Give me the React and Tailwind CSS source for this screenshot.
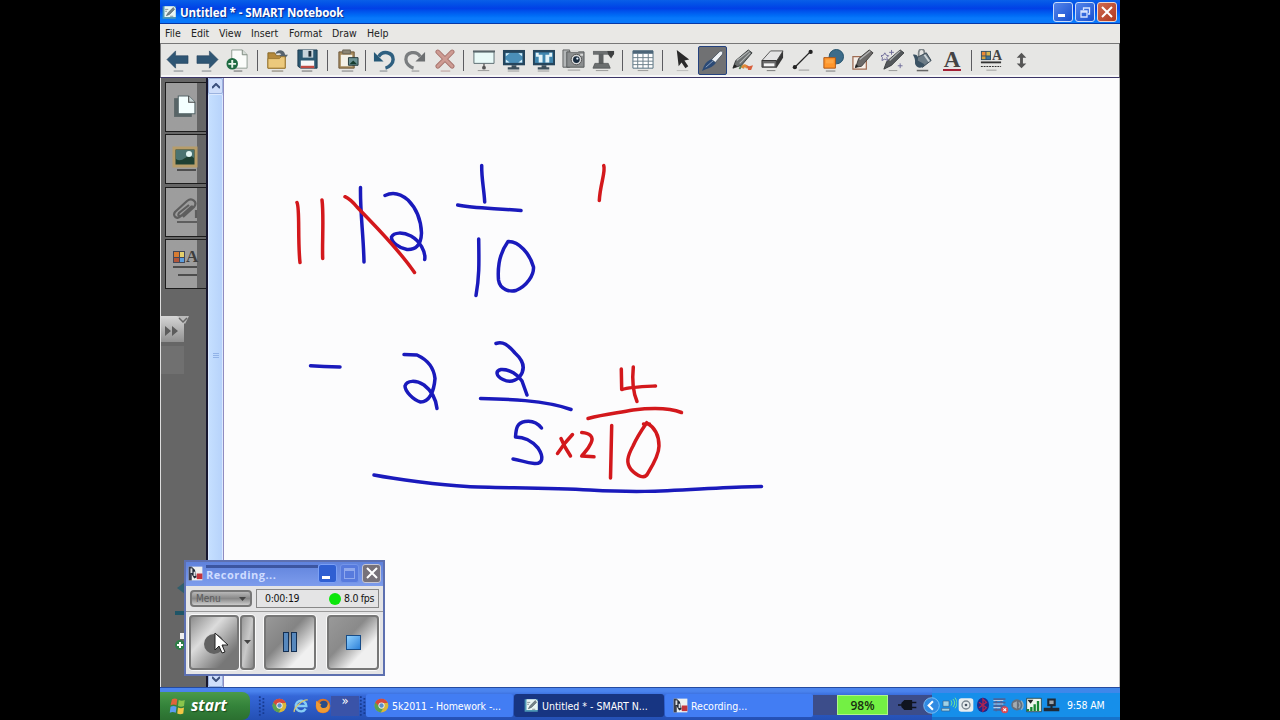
import React from "react";

const SEP = (w) => ({ sep: true, w });

/* Toolbar icons, all on a 24x24 grid */
const ICONS = {
  back: (
    <>
      <path d="M1 11 10 2v5h13v8H10v5z" fill="#2f5674" stroke="#24435c" strokeWidth=".6" />
      <path d="M8 23h10" stroke="#8d9296" strokeWidth="1.2" />
    </>
  ),
  forward: (
    <>
      <path d="M23 11 14 2v5H1v8h13v5z" fill="#2f5674" stroke="#24435c" strokeWidth=".6" />
      <path d="M6 23h10" stroke="#8d9296" strokeWidth="1.2" />
    </>
  ),
  addPage: (
    <>
      <path d="M6 1h11l5 5v14H6z" fill="#fafcfa" stroke="#8d9a90" />
      <path d="M17 1v5h5" fill="#d5ddd7" stroke="#7d8a80" />
      <circle cx="6.500" cy="15.500" r="6" fill="#1e6b42" />
      <path d="M6.500 11.500v8M2.500 15.500h8" stroke="#e6f5ea" strokeWidth="2" />
      <path d="M8 23h9" stroke="#777" strokeWidth="1.200" />
    </>
  ),
  open: (
    <>
      <path d="M2 4h7l2 3h9v13H2z" fill="#b58a3c" stroke="#876627" />
      <path d="M10 5c1-5 9-5 10 1h3l-5 6-4-6h2c-1-2-3-2-6-1z" fill="#56636d" />
      <path d="M2 20V10h12l2-2h4v12z" fill="#ecc97c" stroke="#9c7832" />
      <path d="M6 23h12" stroke="#8d8575" strokeWidth="1.200" />
    </>
  ),
  save: (
    <>
      <path d="M2 1h20v19H5l-3-2z" fill="#2b5871" stroke="#1c3c50" />
      <path d="M7 1h11v8H7z" fill="#c9d5dc" />
      <path d="M13 2h3v6h-3z" fill="#1d2e3b" />
      <path d="M5 12h14v8H5z" fill="#f7f7f7" />
      <path d="M5 17.500h14V20H5z" fill="#c24a42" />
      <path d="M6 23h11" stroke="#7c7c7c" strokeWidth="1.200" />
    </>
  ),
  paste: (
    <>
      <path d="M3 3h16v17H3z" fill="#a58a5d" stroke="#6e583a" />
      <path d="M5 6h12v12H5z" fill="#f4f1e8" />
      <path d="M7 1h8v4H7z" fill="#8c8675" stroke="#6b6557" />
      <path d="M13 9h10v8H13z" fill="#6c9395" stroke="#24383c" />
      <path d="m14 16 4-4 4 4z" fill="#163c2e" />
      <path d="M6 23h12" stroke="#8a8a8a" strokeWidth="1.200" />
    </>
  ),
  undo: (
    <>
      <path d="M6 8c4-7 15-5 15 3 0 4-4 8-8 9" fill="none" stroke="#2f6080" strokeWidth="3.600" />
      <path d="M1 3v10h10z" fill="#255877" />
      <path d="M7 23h8" stroke="#8d9296" strokeWidth="1.200" />
    </>
  ),
  redo: (
    <>
      <path d="M18 8C14 1 3 3 3 11c0 4 4 8 8 9" fill="none" stroke="#7a7d7f" strokeWidth="3.400" />
      <path d="M23 3v10H13z" fill="#6c6f71" />
      <path d="M9 23h8" stroke="#9b9b9b" strokeWidth="1.200" />
    </>
  ),
  remove: (
    <>
      <path d="m5 3 15 15M20 3 5 18" stroke="#a5716b" strokeWidth="4.800" strokeLinecap="round" />
      <path d="m5 3 15 15M20 3 5 18" stroke="#cd9b93" strokeWidth="3" strokeLinecap="round" />
      <path d="M8 23h10" stroke="#c2a6a2" strokeWidth="1.200" />
    </>
  ),
  screen: (
    <>
      <path d="M2 3h21v12H2z" fill="#e9faf8" stroke="#5b6c70" />
      <path d="M1 2.500h23" stroke="#59656a" strokeWidth="2" />
      <path d="M12.500 15v4" stroke="#666" strokeWidth="1.500" />
      <circle cx="12.500" cy="19.500" r="2" fill="#555" />
      <path d="M6 22.500h12" stroke="#999" />
    </>
  ),
  fullScreen: (
    <>
      <path d="M1 1h23v16H1z" fill="#25455c" />
      <path d="M3.500 4h18v10.500h-18z" fill="#4a8fb8" />
      <path d="M4 4.500h4l-4 3zM21 4.500h-4l4 3zM4 14h4l-4-3zM21 14h-4l4-3z" fill="#d7f0fa" />
      <path d="M10 17h5v2h3v2.500H6V19h4z" fill="#3c4f5b" />
      <path d="M6 23h12" stroke="#999" />
    </>
  ),
  dualPage: (
    <>
      <path d="M1 1h23v16H1z" fill="#25455c" />
      <path d="M3 3.500h19v11H3z" fill="#3e85ae" />
      <path d="M4 4h3v2h4v8H7V8H4zM21 4h-3v2h-4v8h4V8h3z" fill="#e2f3f8" />
      <path d="M10 17h5v2h3v2.500H6V19h4z" fill="#3c4f5b" />
      <path d="M6 23h12" stroke="#999" />
    </>
  ),
  camera: (
    <>
      <path d="M1 1h7v18H1z" fill="#b3b6b7" stroke="#5e6162" />
      <path d="M5 3h18v16H5z" fill="#8b8e8f" stroke="#56595a" />
      <path d="M9 1h8v2H9zM19 5h3v2h-3z" fill="#dadada" />
      <circle cx="15" cy="11" r="5.500" fill="#d7d9da" stroke="#555" />
      <circle cx="15" cy="11" r="3.500" fill="#182b3f" />
      <circle cx="16" cy="10" r="1.200" fill="#e5f2ff" />
      <path d="M6 22h13" stroke="#999" />
    </>
  ),
  docCamera: (
    <>
      <path d="M1 2h22v4H1z" fill="#6c6f70" />
      <path d="M16 2h7v3l-3 5-3-4z" fill="#3e4041" />
      <path d="M7 5h5v11H7z" fill="#5d6061" />
      <path d="M3 15h14l2 5H1z" fill="#6b6e6f" stroke="#505354" strokeWidth=".8" />
      <path d="M4 22.500h13" stroke="#999" />
    </>
  ),
  table: (
    <>
      <path d="M2 2h21v18H2z" fill="#fff" stroke="#547080" />
      <path d="M2 1.500h21V5H2z" fill="#4c6578" />
      <path d="M7 5v15M12.500 5v15M18 5v15M2 9h21M2 12.700h21M2 16.300h21" stroke="#6c7f8a" strokeWidth="1" />
      <path d="M7 22.500h11" stroke="#999" />
    </>
  ),
  select: (
    <>
      <path d="m6 1 13 10-5 1 4 6-3 2-4-6-3 4z" fill="#2a2a2a" />
      <path d="M6 22.500h12" stroke="#bbb" />
    </>
  ),
  pen: (
    <>
      <path d="m1 23 2-5c2-4 5-6 9-8l4 4c-3 4-7 6-11 7z" fill="#2b4a76" />
      <path d="m11 11 8-8c2-2 5 0 3 3l-7 8z" fill="#eff3f7" stroke="#3b4855" strokeWidth=".8" />
      <path d="m5 19 8-7" stroke="#8ea5c4" strokeWidth="1" />
    </>
  ),
  creativePen: (
    <>
      <path d="m2 20 3-8L18 1l4 3-11 13z" fill="#6c7070" stroke="#3c4040" />
      <path d="m6 12 13-10M9 15 20 4" stroke="#b3b6b6" strokeWidth="1.200" />
      <path d="m2 20 1.500-4 3 2z" fill="#222" />
      <path d="M9 21c1-4 4-4 4-1" fill="none" stroke="#5b8159" strokeWidth="2" />
      <path d="M12 20c1-4 4-3 5 0" fill="none" stroke="#e08a38" strokeWidth="3" />
      <path d="m16 17 3 1 4-1-2 5h-3z" fill="#d9603d" />
    </>
  ),
  eraser: (
    <>
      <path d="m1 12 9-10h13l-7 11z" fill="#e4e4e4" stroke="#555" />
      <path d="M16 13 23 2v7l-7 11z" fill="#363636" />
      <path d="M1 12h15v7H1z" fill="#6b6b6b" stroke="#333" />
      <path d="M3 15h11v3H3z" fill="#f5f5f5" />
      <path d="M6 22.500h9" stroke="#888" strokeWidth="1.200" />
    </>
  ),
  line: (
    <>
      <path d="M4 19 20 3" stroke="#262626" strokeWidth="1.400" />
      <circle cx="4" cy="19" r="2.200" fill="#222" />
      <circle cx="20.500" cy="3" r="2.200" fill="#222" />
      <path d="M8 22h11" stroke="#999" />
    </>
  ),
  shapes: (
    <>
      <circle cx="16" cy="8" r="7.500" fill="#3c6c8a" stroke="#24526b" />
      <path d="M3 9h12v11H3z" fill="#ff962c" stroke="#ae5513" />
      <path d="M5 11h8v4H5z" fill="#ffa745" />
      <path d="M5 23h10" stroke="#888" strokeWidth="1.200" />
    </>
  ),
  shapePen: (
    <>
      <path d="M2 8h14v13H2z" fill="#f6efe9" stroke="#9f6c53" strokeWidth="1.300" />
      <path d="m5 19 3-9L19 1l4 3-12 14z" fill="#6c6a69" stroke="#41403f" />
      <path d="m9 11 11-9" stroke="#b3b3b3" strokeWidth="1.400" />
      <path d="m4 20 1-4 3 2z" fill="#222" />
    </>
  ),
  magicPen: (
    <>
      <path d="m3 21 3-8L20 1l4 3-13 13z" fill="#54585b" stroke="#3b3e40" />
      <path d="M9 12 20 2" stroke="#b3b7b8" strokeWidth="1.200" />
      <path d="m4 4 1.500 2.500L8 7 6 9l1 3-3-1.500L1 12l.5-3L0 7l2.500-.5zM11 1v5M8.500 3.500h5M20 15v5M17.500 17.500h5" fill="none" stroke="#706d9a" strokeWidth="1" />
      <path d="M8 22.500h9" stroke="#999" />
    </>
  ),
  fill: (
    <>
      <path d="M8 8V4c0-5 6-5 6 0v5" fill="none" stroke="#7e8588" strokeWidth="1.800" />
      <path d="m6 9 10-5 5 8-9 7-6-4z" fill="#6d7c86" stroke="#364550" />
      <path d="M2 6c5-1 6 3 5 6l7 4c-1 4-7 5-9 1-2-3 1-4-3-11z" fill="#3b5263" />
      <path d="m14 6 5 7" stroke="#d0d7da" strokeWidth="2" />
      <path d="M6 22.500h12" stroke="#666" strokeWidth="1.600" />
    </>
  ),
  props: (
    <>
      <path d="M1 1h11v10H1z" fill="#2f516c" />
      <path d="M2 2h4v4H2z" fill="#ec8a35" />
      <path d="M7 2h4v4H7z" fill="#d8b44f" />
      <path d="M2 7h4v3H2z" fill="#d3a13d" />
      <path d="M7 7h4v3H7z" fill="#3d739c" />
      <path d="M1 13.500h22" stroke="#333" strokeWidth="2" />
      <path d="M1 18h22" stroke="#333" strokeWidth="1.300" strokeDasharray="2 1" />
      <path d="M7 22h11" stroke="#999" />
    </>
  ),
  updown: <path d="m12 4 5 5h-3.500v6H17l-5 5-5-5h3.500V9H7z" fill="#555" />,
};

const TOOLBAR = [
  "back", "forward", "addPage", SEP("w-[10px]"),
  "open", "save", SEP("w-[10px]"),
  "paste", SEP("w-[7px]"),
  "undo", "redo", "remove", SEP("w-[9px]"),
  "screen", "fullScreen", "dualPage", "camera", "docCamera", SEP("w-[9px]"),
  "table", SEP("w-[10px]"),
  "select", "pen", "creativePen", "eraser", "line", "shapes", "shapePen", "magicPen", "fill", "text",
  SEP("w-[9px]"), "props", "updown",
];

/* Freehand ink, in page coordinates */
const BLUE_INK = [
  "M360.500 187.500C360 212 363.500 235 364 262",
  "M385 195.500C394 191 401 194 408 200 417 209 421 221 421.500 233 421 246 415 250 407 249.500 399 248 391 242 391.500 237 394 232 403 232 411 236 420 241 426 252 424.700 259.500",
  "M481.700 165.500C481.500 179 484 189 484.700 202",
  "M457.700 205C472 208 488 208 521 210.500",
  "M478.700 239C479 262 479.500 276 476 295.500",
  "M507.700 242C499 254 497.500 267 498.500 280 500 290 510 292 516 290.500 527 286 534 275 533.500 267 530 254 519 241 508 241.500",
  "M310.500 365.800 324 366.500 340 367",
  "M404 354.500 417 355C430 361 434 369 435 378.500 434 392 429 402 420.500 402 413 400 405 391 405 386 407 380 416 380 424 385 432 391 436 400 437 408.500",
  "M496 343.500C503 341 508 345 515 353 525 362 525 370 519.500 377 514 382 508 382 503 379.500 496 376 495 371 501 369.500 510 369 518 375 522 381L527 395",
  "M480.500 398.500C505 399 545 400 571 409.500",
  "M541.500 428C537 422 531 420.500 525 421.500 517 423 516 428 515.500 437 525 437 532 441 538 448 544 457 543 464 534.500 463.500 525 462.500 520 460 513 459",
  "M374 475C395 479 440 485 467 486.500S545 487.500 590 490 655 491.500 700 489 745 487 761.500 486.500",
];

const RED_INK = [
  "M297 202.500C300 208 297.500 240 300 262.500",
  "M322 200C324 215 322 245 322.700 258.500",
  "M345 196.700C350 199 352 201 357 207 375 226 397 247 414.500 272.500",
  "M603.700 165.500C606 171 600 185 599.300 200.500",
  "M561 438.500 565 447 570.500 456",
  "M572.500 434.500 565 443 557.500 453.500",
  "M581.700 432.500C590 433 594 437 591 443 588 450 584 453 581.700 456L594 456.800",
  "M621.300 369 621.700 389.500C630 387 645 386.500 655.500 386",
  "M633.300 367C632 380 633 392 637 401.500",
  "M588 418.500C605 414 618 413 633 410 650 408 670 408 681.500 412.500",
  "M611.700 425.500 610.500 478",
  "M643.500 424 649.500 424M646.700 422.700C641 431 636 439 633 446 627 457 626 463 631 469.500 637 476 645 480 648 473 656 460 659 453 659 446 659 435 654 427 647 423",
];

const Svg = ({ size = 24, children, className = "" }) => (
  <svg width={size} height={size} viewBox="0 0 24 24" className={`shrink-0 ${className}`}>
    {children}
  </svg>
);

const NotebookLogo = () => (
  <Svg size={15}>
    <path d="M1 2h21v20H1z" fill="#4e98b5" />
    <path d="M4 2h15l3 3v14H4z" fill="#e9f6f4" />
    <path d="m7 17 3-5 8-8 2 3-8 8zM5 7h5M5 10h3M13 18h5" fill="#75858a" stroke="#536067" />
  </Svg>
);

const RecorderLogo = ({ size = 15 }) => (
  <Svg size={size}>
    <path d="M1 1h22v22H1z" fill="#eef0ef" />
    <path d="M1 1h5v22H1z" fill="#3a3f4d" />
    <path d="m6 1 5 5 3 12-4 2-5-8z" fill="#222a38" />
    <path d="M4 4h3v7H4zM9 9h3v7H9z" fill="#d9dde2" />
    <path d="M14 12h9v9h-9z" fill="#c3343c" />
  </Svg>
);

const Chrome = ({ size = 15 }) => (
  <Svg size={size}>
    <circle cx="12" cy="12" r="11" fill="#d9b73a" />
    <path d="M2 7a11 11 0 0 1 20 1H12L7 14z" fill="#d5493d" />
    <path d="M2 7a11 11 0 0 0 9 16l4-8-6-1z" fill="#59a152" />
    <circle cx="12" cy="12" r="5" fill="#eee" />
    <circle cx="12" cy="12" r="3.500" fill="#5a8fcb" />
  </Svg>
);

function TitleBar() {
  return (
    <div className="flex h-6 items-center bg-linear-to-b from-[#0a5fe8] via-[#0240e6] via-35% to-[#0878fb] to-75% pr-[3px] pl-[2px] shadow-[inset_0_-1px_0_#0737a5]">
      <div className="mr-[3px] flex">
        <NotebookLogo />
      </div>
      <span className="pt-[1px] font-['Open_Sans','Noto_Sans',sans-serif] text-[11.500px] font-bold tracking-[-0.080px] whitespace-nowrap text-white [text-shadow:1px_1px_1px_#10288c]">
        Untitled * - SMART Notebook
      </span>
      <div className="ml-auto flex gap-[2px]">
        <div className="flex size-[20px] items-end rounded-[3px] border border-[#c9dcfa] bg-linear-to-br from-[#5484ea] to-[#154fd0] p-1">
          <div className="h-[3px] w-[7px] bg-white" />
        </div>
        <div className="flex size-[20px] items-center justify-center rounded-[3px] border border-[#c9dcfa] bg-linear-to-br from-[#5484ea] to-[#154fd0]">
          <svg width="11" height="11" viewBox="0 0 11 11" fill="none" stroke="#d8e4ff" strokeWidth="1.300">
            <path d="M3.500 3V1h6v6H8M1 4h6v6H1zM1 5h6" />
          </svg>
        </div>
        <div className="flex size-[20px] items-center justify-center rounded-[3px] border border-[#ecd5cf] bg-linear-to-br from-[#cf6a50] to-[#b0381c]">
          <svg width="12" height="12" viewBox="0 0 12 12" stroke="#fff" strokeWidth="2">
            <path d="m1 1 10 10M11 1 1 11" />
          </svg>
        </div>
      </div>
    </div>
  );
}

function MenuBar() {
  return (
    <div className="flex h-[19px] items-center bg-[#e9e8e5] pb-[1px] pl-[5px] text-[10.500px] text-[#222]">
      <span className="w-[26px]">File</span>
      <span className="w-[28px]">Edit</span>
      <span className="w-[32px]">View</span>
      <span className="w-[38px]">Insert</span>
      <span className="w-[43px]">Format</span>
      <span className="w-[35px]">Draw</span>
      <span>Help</span>
    </div>
  );
}

function Toolbar() {
  return (
    <div className="flex h-[35px] items-center border border-t-[#777] border-r-[#555] border-b-[#3b3566] border-l-[#777] bg-[#e6e6e4] pl-[1px] shadow-[inset_0_-2px_0_#f7f7f7]">
      {TOOLBAR.map((item, i) => {
        if (item.sep) {
          return (
            <div key={i} className={`flex shrink-0 justify-center ${item.w}`}>
              <div className="h-[21px] w-px bg-[#5c5c60]" />
            </div>
          );
        }
        if (item === "text") {
          return (
            <div key={i} className="flex w-[30px] shrink-0 flex-col items-center">
              <span className="h-[19px] font-['Liberation_Serif',serif] text-[23px] leading-[20px] font-bold text-[#444]">A</span>
              <div className="h-[2px] w-[18px] bg-[#a32035]" />
            </div>
          );
        }
        return (
          <div key={i} className="flex w-[30px] shrink-0 justify-center">
            {item === "pen" ? (
              <div className="flex h-[29px] w-[29px] items-center justify-center rounded-[2px] border border-[#24427f] bg-[#707173]">
                <Svg size={23}>{ICONS.pen}</Svg>
              </div>
            ) : item === "props" ? (
              <div className="relative">
                <Svg size={22}>{ICONS.props}</Svg>
                <span className="absolute top-0 left-[12px] font-['Liberation_Serif',serif] text-[14px] leading-[11px] font-bold text-[#444]">A</span>
              </div>
            ) : (
              <Svg size={23}>{ICONS[item]}</Svg>
            )}
          </div>
        );
      })}
    </div>
  );
}

function SideTab({ children }) {
  return (
    <div className="flex h-[50px] items-center border border-r-0 border-[#1c1c1c] bg-linear-to-r from-[#9d9d9d] from-78% to-[#666] to-78% pb-[2px] pl-[6px]">
      {children}
    </div>
  );
}

function Sidebar() {
  return (
    <div className="flex w-[48px] shrink-0 flex-col border-r-2 border-l border-r-[#16162e] border-l-[#ddd] bg-[#666] pt-[4px]">
      <div className="ml-[4px] flex flex-col gap-[2.300px]">
        <SideTab>
          <Svg size={25}>
            <path d="M2 4h17v18H2z" fill="#586466" />
            <path d="M6 2h10l6 6v11H6z" fill="#f4ffff" stroke="#56676a" />
            <path d="M16 2v6h6" fill="#c7d3d4" stroke="#444" />
          </Svg>
        </SideTab>
        <SideTab>
          <svg width="26" height="27" viewBox="0 0 26 27">
            <path d="M2 3h22v18H2z" fill="#1e4033" stroke="#b79d6a" strokeWidth="3" />
            <path d="M4 5h18v8q-4-4-9 0t-9 1z" fill="#4b7371" />
            <circle cx="17" cy="9" r="3" fill="#e2f5f2" />
            <path d="M5 25h19" stroke="#4f4f4f" strokeWidth="2" />
          </svg>
        </SideTab>
        <SideTab>
          <svg width="27" height="27" viewBox="0 0 27 27" fill="none" stroke="#5e5e5e" strokeWidth="2.200">
            <path d="M20 9 9 19c-4 4-9 0-6-4L15 4c5-4 11 1 7 6L11 20M17 8 7 16c-2 3 1 4 3 2l11-9M5 25h20M24 13v8" />
          </svg>
        </SideTab>
        <SideTab>
          <div className="relative">
            <svg width="26" height="27" viewBox="0 0 26 27">
              <path d="M1 2h12v12H1z" fill="#434858" />
              <path d="M2 3h5v5H2z" fill="#d77c32" />
              <path d="M8 3h4v5H8z" fill="#e4d06b" />
              <path d="M2 9h5v4H2z" fill="#b2563a" />
              <path d="M8 9h4v4H8z" fill="#5c9ede" />
              <path d="M1 18h24M6 26h19" stroke="#4d4d4d" strokeWidth="2" />
            </svg>
            <span className="absolute top-[1px] left-[14px] font-['Liberation_Serif',serif] text-[17px] leading-[14px] font-bold text-[#3e3e3e]">A</span>
          </div>
        </SideTab>
      </div>
      <div className="mt-[27px] flex h-[26px] w-[23px] items-center bg-linear-to-b from-[#d6d6d6] to-[#919191]">
        <svg width="28" height="26" viewBox="0 0 28 26" className="shrink-0 overflow-visible">
          <path d="M16 0h12l-4 8-3-3z" fill="#bbb" />
          <path d="m18 2 4 4 4-4" fill="none" stroke="#666" strokeWidth="1.500" />
          <path d="m4 10 6 5-6 5zM11 10l6 5-6 5z" fill="#5c5c5c" />
        </svg>
      </div>
      <div className="mt-[4px] h-[28px] w-[23px] bg-[#707070]" />
      <svg width="26" height="90" viewBox="0 0 26 90" className="mt-auto mb-[18px]">
        <path d="m16 9 8-6v12z" fill="#315f6d" />
        <path d="M14 32h12v4H14z" fill="#1f5567" />
        <path d="M19 54h6v6h-6z" fill="#eee" />
        <circle cx="19" cy="66" r="5" fill="#2e7e47" />
        <path d="M19 63v6M16 66h6" stroke="#fff" strokeWidth="2" />
      </svg>
    </div>
  );
}

function ScrollBar() {
  return (
    <div className="flex w-[16px] shrink-0 flex-col justify-between border-r border-[#8f8cc0] bg-[#bcd8fd]">
      <div className="flex h-[16px] items-center justify-center rounded-[2px] border border-[#9cb3df] bg-[#cfdefb]">
        <svg width="8" height="6" viewBox="0 0 8 6" fill="none" stroke="#3c507c" strokeWidth="2">
          <path d="m0 5 4-4 4 4" />
        </svg>
      </div>
      <div className="flex flex-1 flex-col items-center justify-center gap-[1px] rounded-[2px] border border-[#dce9ff] bg-linear-to-r from-[#c5dfff] to-[#b7d3fb] pb-[54px]">
        <div className="h-px w-[6px] bg-[#92b3e8]" />
        <div className="h-px w-[6px] bg-[#92b3e8]" />
        <div className="h-px w-[6px] bg-[#92b3e8]" />
      </div>
      <div className="flex h-[16px] items-center justify-center rounded-[2px] border border-[#9cb3df] bg-[#cfdefb]">
        <svg width="8" height="6" viewBox="0 0 8 6" fill="none" stroke="#3c507c" strokeWidth="2">
          <path d="m0 1 4 4 4-4" />
        </svg>
      </div>
    </div>
  );
}

function Canvas() {
  return (
    <div className="min-w-0 flex-1 border-r border-[#bbb] bg-[#fcfcfd]">
      <svg
        width="895"
        height="609"
        viewBox="224 78 895 609"
        fill="none"
        strokeWidth="3.500"
        strokeLinecap="round"
        strokeLinejoin="round"
      >
        <g stroke="#1a1abc">
          {BLUE_INK.map((d) => (
            <path key={d} d={d} />
          ))}
        </g>
        <g stroke="#d3181c">
          {RED_INK.map((d) => (
            <path key={d} d={d} />
          ))}
        </g>
      </svg>
    </div>
  );
}

const CHROME_BTN =
  "flex items-center justify-center rounded-[4px] border-2 border-[#777] bg-linear-to-br shadow-[0_0_0_1px_#fafafa]";

/* Floating screen recorder */
function Recorder() {
  return (
    <div className="absolute top-[560px] left-[24px] flex h-[116px] w-[201px] flex-col border-2 border-[#5d70b0] bg-[#e4e4e5]">
      <div className="flex h-[24px] shrink-0 items-center bg-linear-to-b from-[#5f82dc] to-[#7d9cec] pr-[2px] pb-[2px] pl-[2px]">
        <RecorderLogo />
        <div className="ml-[3px] flex w-[112px] flex-col">
          <div className="h-[3px] bg-[#3c55a0]" />
          <span className="font-['Open_Sans','Noto_Sans',sans-serif] text-[11px] leading-[13px] font-bold tracking-[0.500px] text-[#cfdcff]">
            Recording...
          </span>
        </div>
        <div className="ml-auto flex gap-[3px]">
          <div className="flex size-[19px] items-end rounded-[3px] border border-[#7ba0f5] bg-[#2f5fd2] p-[3px]">
            <div className="h-[3px] w-[8px] bg-white" />
          </div>
          <div className="flex size-[19px] items-center justify-center rounded-[3px] border border-[#7495e8] bg-[#577add]">
            <div className="h-[11px] w-[11px] border border-t-[3px] border-[#8fa8ec]" />
          </div>
          <div className="flex size-[19px] items-center justify-center rounded-[3px] border border-[#c6c6d3] bg-[#77727a]">
            <svg width="12" height="12" viewBox="0 0 12 12" stroke="#fff" strokeWidth="2">
              <path d="m1 1 10 10M11 1 1 11" />
            </svg>
          </div>
        </div>
      </div>
      <div className="flex h-[26px] shrink-0 items-center gap-[4px] border-b border-[#999] px-[4px]">
        <div className="flex h-[17px] w-[62px] items-center justify-between rounded-[4px] border-2 border-[#777] bg-linear-to-b from-[#b8b8b8] via-[#888] to-[#ccc] px-[4px] text-[10px] leading-none text-[#5b5b5b]">
          <span>Menu</span>
          <svg width="7" height="4" viewBox="0 0 7 4">
            <path d="M0 0h7L3.500 4z" fill="#444" />
          </svg>
        </div>
        <div className="flex h-[19px] flex-1 items-center border border-[#888] pl-[8px] text-[10.500px] text-[#111]">
          <span className="w-[64px] tracking-[-0.300px]">0:00:19</span>
          <div className="size-[12px] shrink-0 rounded-full bg-[#0be60b]" />
          <span className="ml-[3px] tracking-[-0.300px] whitespace-nowrap">8.0 fps</span>
        </div>
      </div>
      <div className="flex flex-1 items-center pb-[2px] pl-[3px]">
        <div className={`h-[55px] w-[50px] from-[#8e8e8e] via-[#dcdcdc] via-35% to-[#777] to-80% ${CHROME_BTN}`}>
          <svg width="30" height="36" viewBox="0 0 30 36" className="overflow-visible">
            <circle cx="15" cy="20" r="10" fill="#626262" />
            <path d="M16 9v17l4-4 3 7 3-1-3-7h6z" fill="#fff" stroke="#222" />
          </svg>
        </div>
        <div className={`ml-[1px] h-[55px] w-[15px] from-[#999] via-[#c9c9c9] to-[#888] ${CHROME_BTN}`}>
          <svg width="7" height="4" viewBox="0 0 7 4">
            <path d="M0 0h7L3.500 4z" fill="#444" />
          </svg>
        </div>
        <div className={`ml-[9px] h-[55px] w-[52px] gap-[2px] from-[#999] via-[#848484] via-40% to-[#f0f0f0] to-75% ${CHROME_BTN}`}>
          <div className="h-[20px] w-[6px] border border-[#142f52] bg-[#5788bd]" />
          <div className="h-[20px] w-[6px] border border-[#142f52] bg-[#5788bd]" />
        </div>
        <div className={`ml-[11px] h-[55px] w-[52px] from-[#999] via-[#8a8a8a] via-40% to-[#f0f0f0] to-70% ${CHROME_BTN}`}>
          <div className="size-[15px] border border-[#174c87] bg-linear-to-br from-[#91d2ff] to-[#2b81d8]" />
        </div>
      </div>
    </div>
  );
}

const Grip = () => (
  <svg width="8" height="22" viewBox="0 0 8 22" stroke="#173b91" strokeWidth="2">
    <path d="M2 0v22M6 2v20" strokeDasharray="2 2" />
  </svg>
);

function TaskBar() {
  return (
    <div className="flex h-[33px] items-stretch border-t border-[#254ba0] bg-linear-to-b from-[#4b84ee] from-10% via-[#3567d8] via-25% to-[#2450b4] text-[10.500px] text-white">
      <div className="mt-[4px] flex w-[90px] shrink-0 items-center rounded-r-[8px] bg-linear-to-b from-[#4a9a4b] via-[#34833a] to-[#2b6f30] pl-[9px]">
        <Svg size={18}>
          <path d="M4 3q4-2 7 0l-1 8q-4-2-8 0z" fill="#e0643a" />
          <path d="M13 4q4 2 8 0l-1 8q-4 2-8 0z" fill="#8ac54c" />
          <path d="M2 13q4-2 8 0l-1 8q-4-2-8 0z" fill="#5b9df0" />
          <path d="M12 14q4 2 8 0l-1 8q-4 2-8 0z" fill="#f3c646" />
        </Svg>
        <span className="ml-[4px] font-['Open_Sans','Noto_Sans',sans-serif] text-[15.500px] leading-none font-bold italic [text-shadow:1px_1px_1px_#1b4a1e]">
          start
        </span>
      </div>
      <div className="flex w-[116px] shrink-0 items-center pt-[3px] pl-[8px]">
        <Grip />
        <div className="ml-[7px] flex flex-1 items-center gap-[6px]">
          <Chrome />
          <Svg size={16}>
            <path d="M19 16a8 8 0 1 1 1-4H6" fill="none" stroke="#87cdf5" strokeWidth="3.600" />
            <path d="M2 21C0 15 15 2 22 3" fill="none" stroke="#d9c56d" strokeWidth="2" />
          </Svg>
          <Svg size={16}>
            <circle cx="12" cy="12" r="11" fill="#de7426" />
            <circle cx="13" cy="10" r="6" fill="#294b88" />
            <path d="M2 4c3 2 4 5 8 5-3 2-2 6 3 6 4 0 6-3 7-8 4 8 0 15-8 15S0 15 2 4z" fill="#ef9b35" />
          </Svg>
        </div>
        <div className="flex h-[20px] w-[31px] items-start justify-center bg-[#3a53a8] text-[13px] leading-[9px]">»</div>
        <Grip />
      </div>
      <div className="mt-[6px] flex h-[23px] w-[147px] shrink-0 items-center gap-[3px] rounded-[2px] bg-[#427df3] pl-[8px]">
        <Chrome />
        <span className="pt-[2px] whitespace-nowrap tracking-[-0.100px]">5k2011 - Homework -...</span>
      </div>
      <div className="mt-[6px] ml-[1px] flex h-[23px] w-[150px] shrink-0 items-center gap-[3px] rounded-[3px] bg-[#173582] pl-[10px]">
        <NotebookLogo />
        <span className="pt-[2px] whitespace-nowrap">Untitled * - SMART N...</span>
      </div>
      <div className="mt-[6px] ml-[1px] flex h-[23px] w-[148px] shrink-0 items-center gap-[3px] rounded-[2px] bg-[#427df3] pl-[8px]">
        <RecorderLogo />
        <span className="pt-[2px]">Recording...</span>
      </div>
      <div className="mt-[7px] flex h-[20px] w-[119px] shrink-0 bg-[#3c4d8a]">
        <div className="ml-[24px] flex w-[51px] items-center justify-center border border-[#b0f58a] bg-[#73f044] pt-[1px] font-['Open_Sans','Noto_Sans',sans-serif] text-[12px] font-semibold text-[#182e10]">
          98%
        </div>
        <Svg size={20} className="ml-[10px]">
          <path d="M8 7h8v10H8l-3-3v-4zM16 9h6M16 15h6M0 12h6" fill="#101420" stroke="#101420" strokeWidth="2" />
        </Svg>
      </div>
      <div className="flex flex-1 items-center bg-linear-to-b from-[#3f87ea] from-14% to-[#168fea] to-15% pt-[2px] shadow-[inset_0_-3px_0_#1673cc]">
        <Svg size={17} className="-ml-[9px]">
          <circle cx="12" cy="12" r="11" fill="#318be3" stroke="#9bd3ff" />
          <path d="m14 6-6 6 6 6" fill="none" stroke="#fff" strokeWidth="3" />
        </Svg>
        <div className="ml-[1px] flex items-center gap-[1px]">
          <Svg size={16}>
            <path d="M3 6h9v8H3zM1 17h12v4H1z" fill="#9fd2e7" stroke="#365f88" />
            <path d="M15 5q3 4 0 8M18 3q5 6 0 12M21 1q6 8 0 16" fill="none" stroke="#6ee19b" strokeWidth="1.500" />
          </Svg>
          <Svg size={16}>
            <rect x="1" y="2" width="22" height="20" rx="4" fill="#e7edef" />
            <circle cx="12" cy="12" r="6" fill="none" stroke="#7b8790" strokeWidth="2" />
            <circle cx="12" cy="12" r="2" fill="#465362" />
          </Svg>
          <Svg size={16}>
            <ellipse cx="12" cy="12" rx="9" ry="11" fill="#1a2a8e" />
            <path d="m6 8 11 8-5 5V3l5 5-11 8" fill="none" stroke="#b02350" strokeWidth="2" />
          </Svg>
          <Svg size={17}>
            <path d="M2 3h17M2 8h17M2 13h17M2 18h10M6 2v18M13 2v18" stroke="#4a639a" strokeWidth="2.500" />
            <path d="M2 5h14M2 10h14M2 15h10" stroke="#b7cbe5" strokeWidth="1.500" />
            <circle cx="18" cy="18" r="5" fill="#d94a55" />
            <path d="m16 16 4 4M20 16l-4 4" stroke="#fff" strokeWidth="1.500" />
          </Svg>
          <Svg size={15}>
            <circle cx="11" cy="11" r="9" fill="#66707c" />
            <path d="m5 8 6-3v12l-6-3z" fill="#a5abb0" />
            <path d="M14 7q4 4 0 9M18 4q6 8 0 15" fill="none" stroke="#9daab2" strokeWidth="2" />
          </Svg>
          <Svg size={16}>
            <path d="M1 2h22v20H1z" fill="#eef5ed" stroke="#14221a" />
            <path d="M3 21v-3M8 21v-6M13 21V11M18 21V6" stroke="#168633" strokeWidth="3.500" />
            <path d="M2 4h9l-4 6z" fill="#222" />
          </Svg>
          <Svg size={17}>
            <path d="M6 2h12v11H6zM1 15h22v5H1z" fill="#202a36" />
            <path d="M9 5h6v5H9z" fill="#9ea6ac" />
            <path d="M12 12v4" stroke="#202a36" strokeWidth="3" />
          </Svg>
        </div>
        <span className="ml-[7px] pt-[1px] text-[10.500px] tracking-[-0.200px] whitespace-nowrap">9:58 AM</span>
      </div>
    </div>
  );
}

export default function App() {
  return (
    <div className="flex h-[720px] w-[1280px] justify-center overflow-hidden bg-black">
      <div className="relative flex w-[960px] flex-col bg-[#e9e8e5] font-['DejaVu_Sans_Condensed','Noto_Sans',sans-serif] leading-none">
        <TitleBar />
        <MenuBar />
        <Toolbar />
        <div className="flex min-h-0 flex-1">
          <Sidebar />
          <ScrollBar />
          <Canvas />
        </div>
        <TaskBar />
        <Recorder />
      </div>
    </div>
  );
}
